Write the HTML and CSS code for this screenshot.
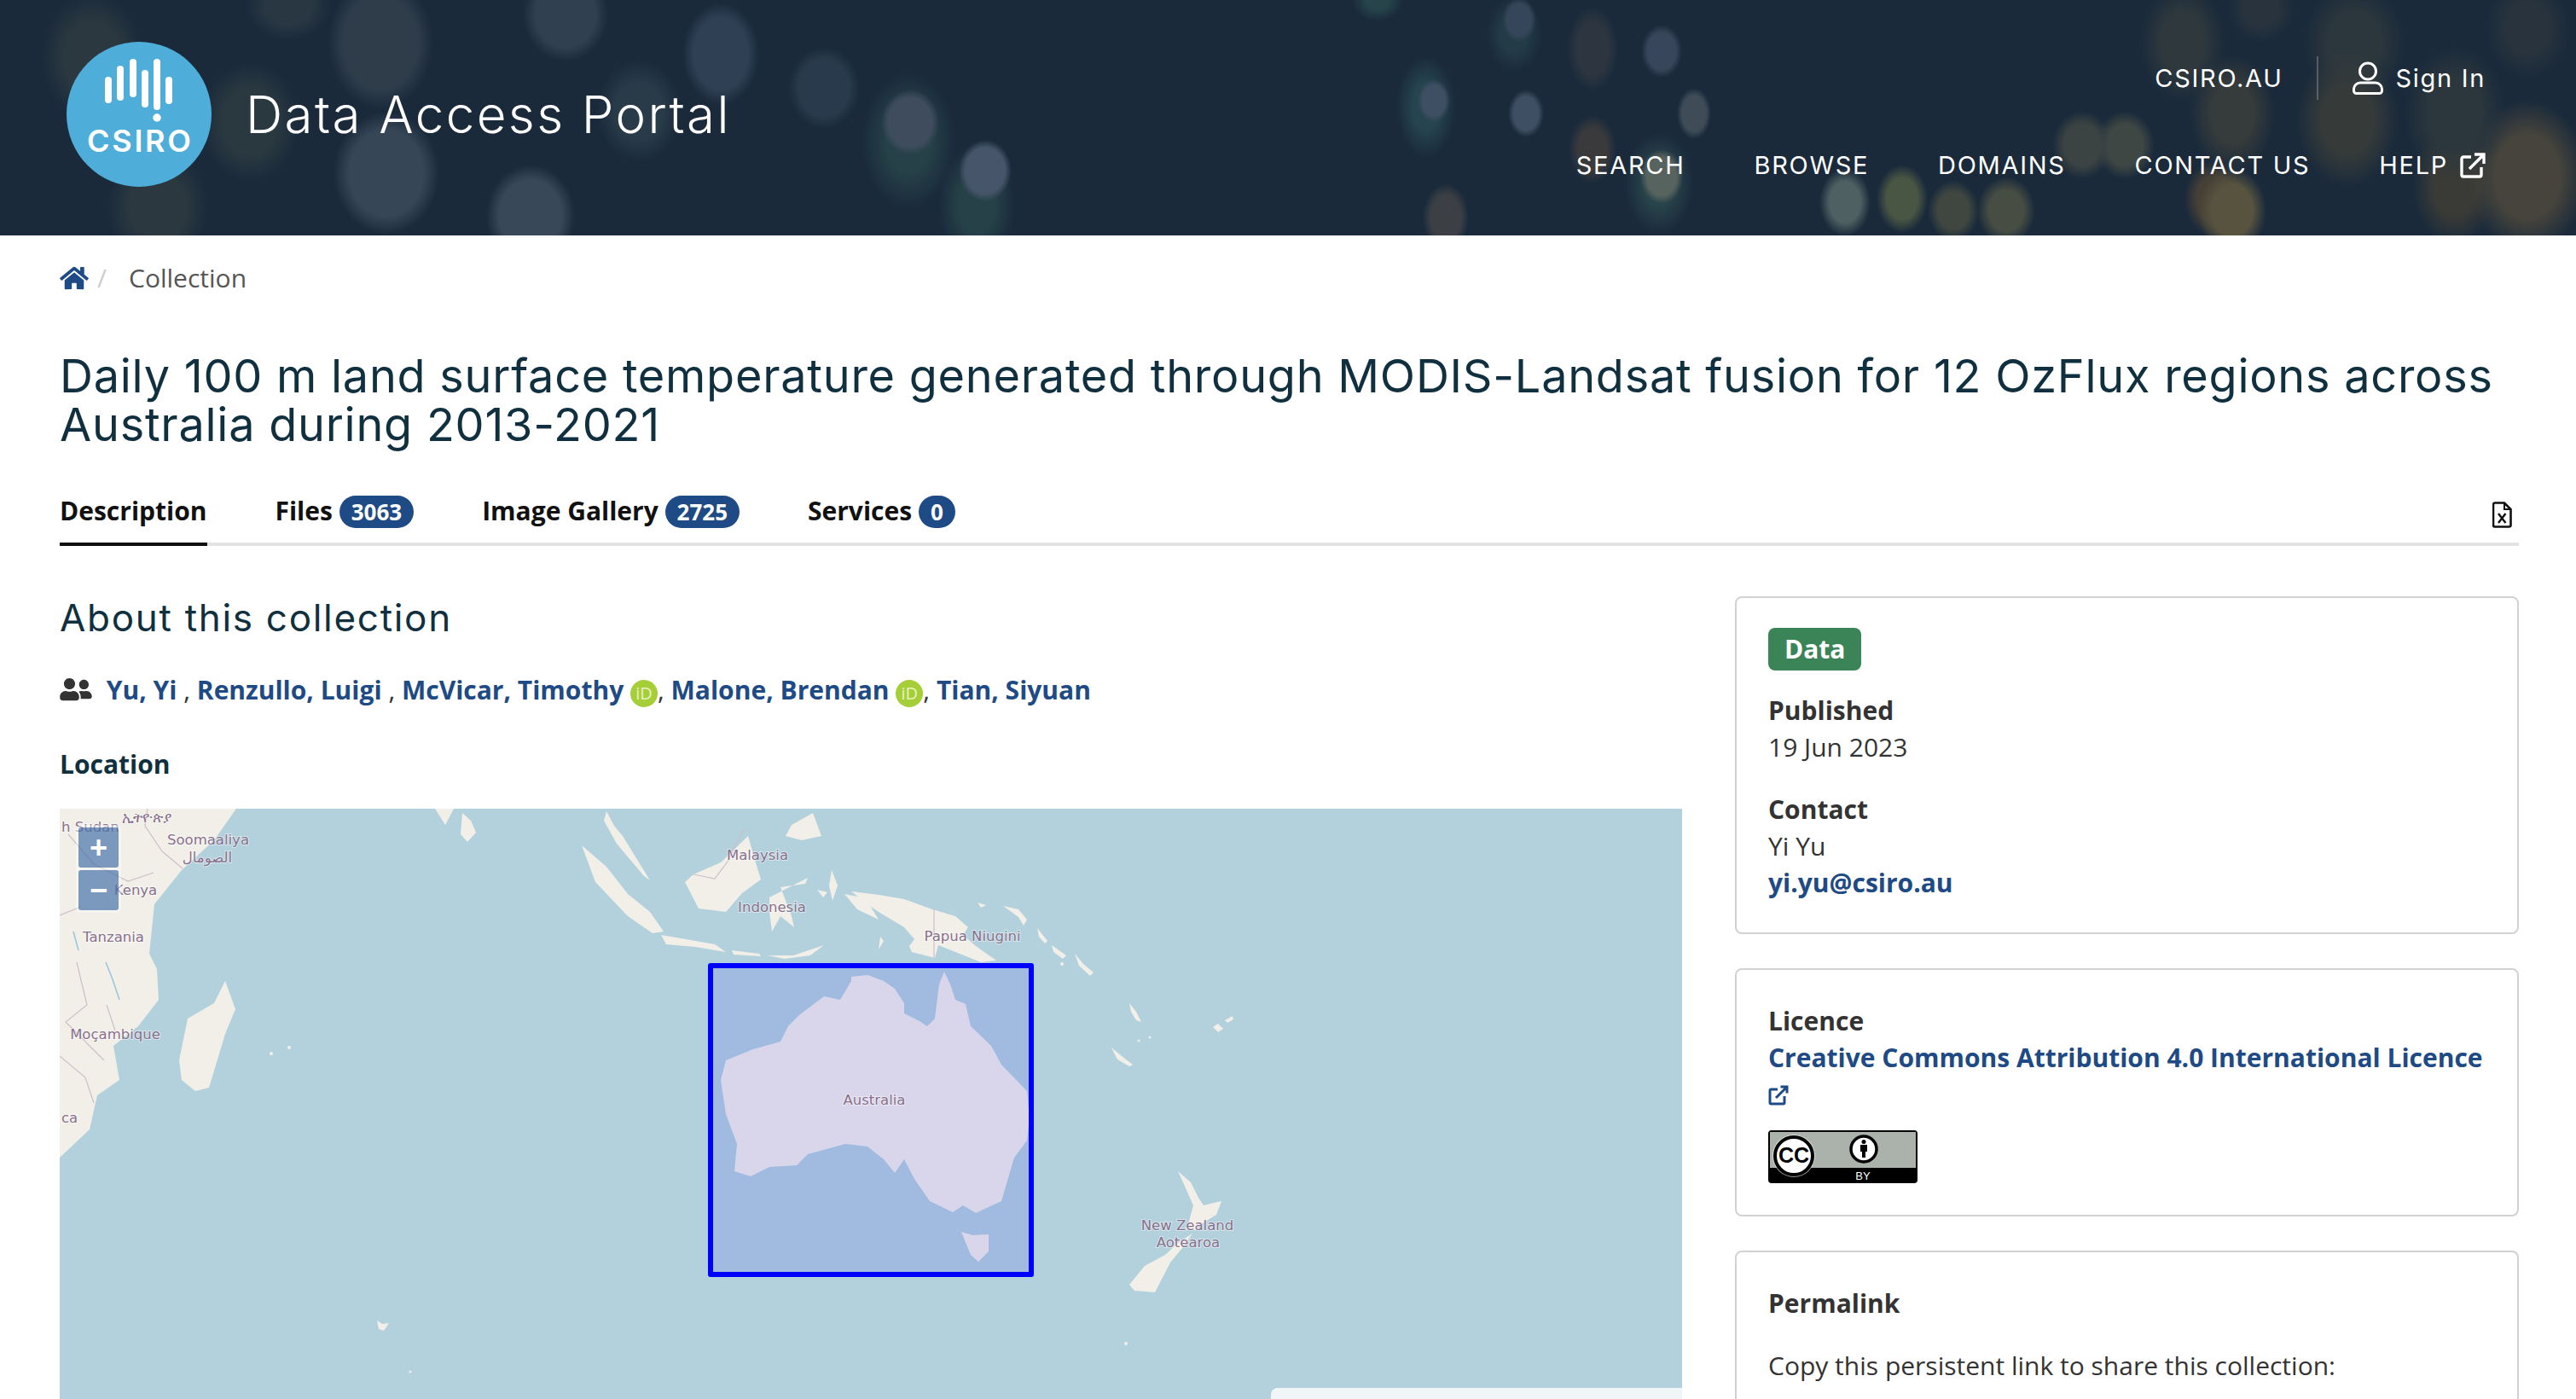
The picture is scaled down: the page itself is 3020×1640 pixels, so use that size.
FILE: index.html
```html
<!DOCTYPE html>
<html lang="en">
<head>
<meta charset="UTF-8">
<title>Data Access Portal</title>
<link rel="stylesheet" href="styles.css">
</head>
<body>

<header class="site-header">
    <a class="brand" href="#">
        <svg class="logo" viewBox="0 0 170 170">
            <circle cx="85" cy="85" r="85" fill="#4fadd9"/>
            <g stroke="#fff" stroke-width="8" stroke-linecap="round">
                <line x1="49" y1="45" x2="49" y2="68"/>
                <line x1="63" y1="32" x2="63" y2="65"/>
                <line x1="78" y1="24" x2="78" y2="61"/>
                <line x1="92" y1="37" x2="92" y2="73"/>
                <line x1="106" y1="24" x2="106" y2="76"/>
                <line x1="120" y1="45" x2="120" y2="69"/>
            </g>
            <circle cx="106" cy="89" r="4.7" fill="#fff"/>
            <text class="logo-text" x="24" y="129" textLength="122" lengthAdjust="spacing">CSIRO</text>
        </svg>
        <span class="brand-name">Data Access Portal</span>
    </a>
    <div class="header-right">
        <div class="util-nav">
            <a href="#">CSIRO.AU</a>
            <span class="util-divider"></span>
            <a class="sign-in" href="#">
                <svg class="icon-user" viewBox="0 0 36 40" fill="none" stroke="#fff" stroke-width="3">
                    <circle cx="18" cy="11.5" r="9.5"/>
                    <path d="M9 25h18a7.5 7.5 0 0 1 7.5 7.5v2a3 3 0 0 1-3 3h-27a3 3 0 0 1-3-3v-2A7.5 7.5 0 0 1 9 25z"/>
                </svg>
                Sign In
            </a>
        </div>
        <nav class="main-nav">
            <a href="#">SEARCH</a>
            <a href="#">BROWSE</a>
            <a href="#">DOMAINS</a>
            <a href="#">CONTACT US</a>
            <a class="help" href="#">HELP
                <svg class="icon-ext" viewBox="0 0 30 30" fill="none" stroke="#fff" stroke-width="3.4">
                    <path d="M13 5H4a2 2 0 0 0-2 2v19a2 2 0 0 0 2 2h19a2 2 0 0 0 2-2v-9"/>
                    <path d="M11 19L27 3M17 2h11v11"/>
                </svg>
            </a>
        </nav>
    </div>
</header>

<div class="page">
    <div class="breadcrumb">
        <a href="#">
            <svg class="icon-home" viewBox="0 0 576 512"><path fill="#1e4a85" d="M280.37 148.26L96 300.11V464a16 16 0 0 0 16 16l112.06-.29a16 16 0 0 0 15.92-16V368a16 16 0 0 1 16-16h64a16 16 0 0 1 16 16v95.64a16 16 0 0 0 16 16.05L464 480a16 16 0 0 0 16-16V300L295.67 148.26a12.19 12.19 0 0 0-15.3 0zM571.6 251.47L488 182.56V44.05a12 12 0 0 0-12-12h-56a12 12 0 0 0-12 12v72.61L318.47 43a48 48 0 0 0-61 0L4.34 251.47a12 12 0 0 0-1.6 16.9l25.5 31A12 12 0 0 0 45.15 301l235.22-193.74a12.19 12.19 0 0 1 15.3 0L530.9 301a12 12 0 0 0 16.9-1.6l25.5-31a12 12 0 0 0-1.7-16.93z"/></svg>
        </a>
        <span class="crumb-sep">/</span>
        <span>Collection</span>
    </div>

    <h1 class="page-title">Daily 100 m land surface temperature generated through MODIS-Landsat fusion for 12 OzFlux regions across Australia during 2013-2021</h1>

    <div class="tabs">
        <a class="tab active" href="#">Description</a>
        <a class="tab" href="#">Files <span class="count">3063</span></a>
        <a class="tab" href="#">Image Gallery <span class="count">2725</span></a>
        <a class="tab" href="#">Services <span class="count">0</span></a>
        <a class="tab-export" href="#">
            <svg class="icon-xls" viewBox="0 0 23 31" fill="none" stroke="#111" stroke-width="2.6">
                <path d="M3 1.5h11l7.5 7.5v18.5a2 2 0 0 1-2 2H3a2 2 0 0 1-2-2v-24a2 2 0 0 1 2-2z"/>
                <path d="M14 1.5V9h7.5" stroke-width="2"/>
                <path d="M7 14l8.5 11M15.5 14L7 25" stroke-width="2.4"/>
            </svg>
        </a>
    </div>

    <div class="content">
        <main>
            <h2 class="section-title">About this collection</h2>
            <p class="authors">
                <svg class="icon-users" viewBox="0 0 640 512"><path fill="#333" d="M192 256c61.9 0 112-50.1 112-112S253.9 32 192 32 80 82.1 80 144s50.1 112 112 112zm76.8 32h-8.3c-20.8 10-43.9 16-68.5 16s-47.6-6-68.5-16h-8.3C51.6 288 0 339.6 0 403.2V432c0 26.5 21.5 48 48 48h288c26.5 0 48-21.5 48-48v-28.8c0-63.6-51.6-115.2-115.2-115.2zM480 256c53 0 96-43 96-96s-43-96-96-96-96 43-96 96 43 96 96 96zm48 32h-3.8c-13.9 4.8-28.6 8-44.2 8s-30.3-3.2-44.2-8H432c-20.4 0-39.2 5.9-55.7 15.4 24.4 26.3 39.7 61.2 39.7 99.8v38.4c0 2.2-.5 4.3-.6 6.4H592c26.5 0 48-21.5 48-48 0-61.9-50.1-112-112-112z"/></svg>
                <a href="#">Yu, Yi</a> , <a href="#">Renzullo, Luigi</a> , <a href="#">McVicar, Timothy</a> <span class="orcid">iD</span>, <a href="#">Malone, Brendan</a> <span class="orcid">iD</span>, <a href="#">Tian, Siyuan</a>
            </p>
            <h3 class="location-title">Location</h3>

            <div class="map">
                <svg class="map-canvas" viewBox="0 0 1902 720">
                    <g fill="#f2efe9" class="land">
                        <!-- africa -->
                        <polygon points="0,0 207,0 181,37 143,72 111,112 105,170 114,188 116,224 92,255 63,278 70,318 44,336 35,376 0,409"/>
                        <polygon points="194,202 206,235 194,264 175,327 159,331 143,318 140,295 150,246 181,228"/>
                        <circle cx="248" cy="287" r="2"/><circle cx="269" cy="280" r="2"/>
                        <polygon points="372,600 378,604 386,603 380,612 374,610"/>
                        <circle cx="411" cy="660" r="1.5"/>
                        <!-- india, sri lanka -->
                        <polygon points="440,0 452,19 462,0"/>
                        <polygon points="472,5 482,14 488,28 478,39 470,30"/>
                        <!-- south east asia -->
                        <polygon points="641,3 650,20 660,32 692,84 685,79 653,41 638,14"/>
                        <polygon points="612,43 641,68 666,100 692,121 708,144 695,146 666,126 628,86"/>
                        <polygon points="705,148 740,154 768,159 781,168 745,162 711,159"/>
                        <polygon points="788,166 820,170 822,173 790,171"/>
                        <polygon points="830,172 860,172 896,160 880,172 850,176"/>
                        <polygon points="807,32 815,60 822,83 800,99 781,121 749,117 733,86 743,77 775,63"/>
                        <polygon points="832,104 877,81 874,88 845,92 858,126 861,139 845,126 835,144 832,121"/>
                        <polygon points="858,19 883,5 893,32 870,37 851,32"/>
                        <polygon points="905,72 912,90 906,108 902,90"/>
                        <polygon points="920,100 945,105 960,130 935,118"/>
                        <polygon points="888,95 900,98 895,104"/>
                        <polygon points="962,150 966,155 960,165"/>
                        <!-- papua -->
                        <polygon points="928,97 960,101 990,106 1020,117 1050,126 1065,139 1059,148 1074,161 1098,178 1080,180 1050,168 1030,160 1026,175 999,168 996,161 1002,153 990,139 960,121 947,112"/>
                        <polygon points="1076,110 1086,113 1080,116"/>
                        <polygon points="1106,114 1124,118 1134,130 1130,137 1124,127"/>
                        <polygon points="1146,140 1158,155 1155,158 1148,150"/>
                        <polygon points="1163,160 1180,172 1176,176 1165,168"/>
                        <polygon points="1190,170 1200,182 1212,192 1208,196 1195,184"/>
                        <circle cx="1175" cy="182" r="2"/>
                        <!-- pacific -->
                        <polygon points="1254,228 1262,238 1268,250 1262,248 1256,238"/>
                        <polygon points="1233,280 1245,290 1258,300 1254,302 1240,294"/>
                        <polygon points="1352,256 1358,252 1364,258 1358,262"/>
                        <polygon points="1366,248 1375,243 1376,247 1369,251"/>
                        <circle cx="1265" cy="272" r="1.5"/><circle cx="1278" cy="268" r="1.5"/>
                        <!-- australia -->
                        <polygon points="928,197 947,195 966,202 979,211 990,228 990,240 1008,249 1017,255 1026,246 1031,206 1037,191 1044,206 1050,224 1062,229 1068,255 1092,278 1104,300 1134,331 1137,362 1134,389 1119,409 1104,460 1074,474 1059,465 1047,473 1020,460 1011,447 1002,434 990,411 979,427 966,411 947,396 921,393 877,405 864,418 832,420 810,431 791,425 794,393 781,358 775,318 781,295 813,282 845,273 854,255 867,242 896,220 915,224 928,202"/>
                        <polygon points="1057,496 1070,500 1089,499 1089,519 1077,531 1068,523"/>
                        <!-- new zealand -->
                        <polygon points="1311,425 1326,438 1335,456 1341,465 1362,460 1356,476 1338,487 1332,494 1320,492 1323,487 1329,465 1317,438"/>
                        <polygon points="1328,498 1317,514 1302,532 1284,567 1260,565 1254,558 1272,536 1296,523 1311,509"/>
                        <circle cx="1250" cy="627" r="2"/>
                    </g>
                    <g fill="none" stroke="#cdbfc9" stroke-width="1.2">
                        <path d="M103 0l-3 20 20 30 24 20M10 30l30 35 40 20 30-10M0 125l25-10M20 180l12 50-25 20 45 45M65 260l-10-30M0 290l30 25 10 30"/>
                        <path d="M743 77l25 5 15-20 20-40"/>
                        <line x1="1025" y1="115" x2="1025" y2="175"/>
                    </g>
                    <g fill="none" stroke="#9bc6e0" stroke-width="1.6">
                        <path d="M16 144l6 22"/>
                        <path d="M54 180l8 20 8 24"/>
                    </g>
                    <rect class="extent" x="763" y="184" width="376" height="362"/>
                    <g class="map-labels">
                        <text x="102" y="16" text-anchor="middle">ኢትዮጵያ</text>
                        <text x="2" y="27">h Sudan</text>
                        <text x="174" y="42" text-anchor="middle">Soomaaliya</text>
                        <text x="173" y="63" text-anchor="middle">الصومال</text>
                        <text x="89" y="101" text-anchor="middle">Kenya</text>
                        <text x="63" y="156" text-anchor="middle">Tanzania</text>
                        <text x="65" y="270" text-anchor="middle">Moçambique</text>
                        <text x="2" y="368">ca</text>
                        <text x="818" y="60" text-anchor="middle">Malaysia</text>
                        <text x="835" y="121" text-anchor="middle">Indonesia</text>
                        <text x="955" y="347" text-anchor="middle">Australia</text>
                        <text x="1070" y="155" text-anchor="middle">Papua Niugini</text>
                        <text x="1322" y="494" text-anchor="middle">New Zealand</text>
                        <text x="1323" y="514" text-anchor="middle">Aotearoa</text>
                    </g>
                </svg>
                <div class="zoom-control">
                    <button class="zoom-btn">+</button>
                    <button class="zoom-btn">−</button>
                </div>
                <div class="attribution"></div>
            </div>
        </main>

        <aside class="sidebar">
            <section class="card data-card">
                <span class="type-badge">Data</span>
                <div class="meta-group">
                    <h4>Published</h4>
                    <p>19 Jun 2023</p>
                </div>
                <div class="meta-group">
                    <h4>Contact</h4>
                    <p>Yi Yu</p>
                    <p><a href="#">yi.yu@csiro.au</a></p>
                </div>
            </section>

            <section class="card licence-card">
                <h4>Licence</h4>
                <p><a href="#">Creative Commons Attribution 4.0 International Licence
                    <svg class="icon-ext-small" viewBox="0 0 24 24" fill="none" stroke="#1e4a85" stroke-width="3">
                        <path d="M11 5H3.5A1.5 1.5 0 0 0 2 6.5v14A1.5 1.5 0 0 0 3.5 22h14a1.5 1.5 0 0 0 1.5-1.5V13"/>
                        <path d="M9 15L22 2M14.5 2H22v7.5"/>
                    </svg>
                </a></p>
                <svg class="cc-badge" viewBox="0 0 175 62">
                    <rect width="175" height="62" rx="4" fill="#000"/>
                    <path d="M2 2h171v42H2z" fill="#aab2ab"/>
                    <circle cx="30" cy="30" r="25" fill="#fff" opacity=".55"/>
                    <circle cx="30" cy="30" r="22" fill="#fff" stroke="#000" stroke-width="4"/>
                    <text class="cc-text" x="30" y="38" text-anchor="middle">CC</text>
                    <circle cx="112" cy="22" r="15" fill="#fff" stroke="#000" stroke-width="3.5"/>
                    <circle cx="112" cy="13.5" r="2.5" fill="#000"/>
                    <path d="M108 17h8v8h-2v7h-4v-7h-2z" fill="#000"/>
                    <text class="by-text" x="111" y="58" text-anchor="middle">BY</text>
                </svg>
            </section>

            <section class="card permalink-card">
                <h4>Permalink</h4>
                <p>Copy this persistent link to share this collection:</p>
            </section>
        </aside>
    </div>
</div>

</body>
</html>
```

FILE: styles.css
```css
html, body {
    height: 100%;
    overflow: hidden;
}
body {
    margin: 0;
    background: #fff;
    color: #333;
    font-family: "Open Sans", "Noto Sans", sans-serif;
    font-size: 30px;
    line-height: 43px;
}
a {
    color: #1e4a85;
    text-decoration: none;
}
p, h1, h2, h3, h4 {
    margin: 0;
}

/* header, the bokeh is all background layers */
.site-header {
    height: 276px;
    display: flex;
    justify-content: space-between;
    background-color: #1a2a3b;
    background-image:
        radial-gradient(34px 38px at 1067px 143px, #3f4c5e 75%, transparent),
        radial-gradient(31px 36px at 1155px 200px, #46556a 75%, transparent),
        radial-gradient(19px 25px at 1681px 118px, #3f4f63 70%, transparent),
        radial-gradient(21px 28px at 1789px 133px, #3f4f63 70%, transparent),
        radial-gradient(20px 26px at 1781px 23px, #35465a 70%, transparent),
        radial-gradient(24px 31px at 1948px 60px, #37465a 70%, transparent),
        radial-gradient(20px 30px at 1986px 133px, #3f4c58 70%, transparent),
        radial-gradient(25px 32px at 1948px 207px, #57635f 70%, transparent),
        radial-gradient(30px 40px at 2163px 237px, #4e6062 60%, transparent),
        radial-gradient(30px 40px at 2230px 233px, #4a5644 60%, transparent),
        radial-gradient(34px 40px at 2352px 247px, #474d43 60%, transparent),
        radial-gradient(30px 36px at 2290px 247px, #404741 60%, transparent),
        radial-gradient(35px 40px at 2441px 170px, #3c4443 60%, transparent),
        radial-gradient(35px 40px at 2491px 170px, #3f4744 60%, transparent),
        radial-gradient(40px 50px at 2617px 247px, #57533f 60%, transparent),
        radial-gradient(35px 45px at 2596px 233px, #453f36 60%, transparent),
        radial-gradient(27px 40px at 1695px 255px, #3c4045 65%, transparent),
        radial-gradient(30px 50px at 1867px 57px, #2d3640 60%, transparent),
        radial-gradient(28px 40px at 1867px 175px, #3a3a3c 60%, transparent),
        radial-gradient(62px 78px at 446px 50px, #2f3d4b 70%, transparent),
        radial-gradient(50px 55px at 663px 17px, #304050 70%, transparent),
        radial-gradient(45px 60px at 845px 63px, #2f4055 70%, transparent),
        radial-gradient(42px 48px at 966px 103px, #283a4b 70%, transparent),
        radial-gradient(62px 72px at 453px 203px, #374657 70%, transparent),
        radial-gradient(52px 60px at 622px 253px, #394859 70%, transparent),
        radial-gradient(58px 70px at 293px 143px, #2a3940 55%, transparent),
        radial-gradient(50px 60px at 749px 130px, #293a49 55%, transparent),
        radial-gradient(60px 75px at 108px 67px, #2b3840 55%, transparent),
        radial-gradient(60px 70px at 185px 243px, #2b3840 55%, transparent),
        radial-gradient(50px 40px at 338px 7px, #283742 55%, transparent),
        radial-gradient(55px 80px at 1065px 165px, #264248 45%, transparent),
        radial-gradient(45px 70px at 1145px 240px, #264248 45%, transparent),
        radial-gradient(35px 60px at 1672px 125px, #264450 45%, transparent),
        radial-gradient(33px 45px at 1775px 40px, #233b47 45%, transparent),
        radial-gradient(40px 60px at 1945px 215px, #28434a 45%, transparent),
        radial-gradient(30px 25px at 1615px 0, #26444a 45%, transparent),
        radial-gradient(50px 70px at 2559px 50px, #2e383d 50%, transparent),
        radial-gradient(50px 70px at 2617px 133px, #363b3b 50%, transparent),
        radial-gradient(60px 80px at 2752px 140px, #363b3a 50%, transparent),
        radial-gradient(60px 70px at 2760px 50px, #2c373d 50%, transparent),
        radial-gradient(60px 80px at 2878px 133px, #2c373d 50%, transparent),
        radial-gradient(70px 90px at 2963px 207px, #46443c 55%, transparent),
        radial-gradient(50px 70px at 2878px 217px, #3a3b36 50%, transparent),
        radial-gradient(50px 60px at 2963px 33px, #28333d 50%, transparent),
        radial-gradient(40px 40px at 2651px 10px, #28333d 50%, transparent);
}
.site-header a {
    color: #fff;
}
.brand {
    display: flex;
    align-items: center;
    gap: 40px;
    padding-left: 78px;
    height: 268px;
}
.logo {
    width: 170px;
    height: 170px;
}
.logo-text {
    fill: #fff;
    font-family: Inter, sans-serif;
    font-size: 36px;
    font-weight: 600;
}
.brand-name {
    font-family: Inter, sans-serif;
    font-size: 60px;
    font-weight: 300;
    letter-spacing: 2.4px;
    line-height: 70px;
}
.header-right {
    display: flex;
    flex-direction: column;
    align-items: flex-end;
    padding: 66px 106px 0 0;
    font-family: Inter, sans-serif;
    font-size: 29px;
    font-weight: 400;
    letter-spacing: 1.7px;
}
.util-nav {
    display: flex;
    align-items: center;
    height: 51px;
}
.util-divider {
    width: 2px;
    height: 51px;
    margin: 0 40px;
    background: rgba(255, 255, 255, 0.22);
}
.sign-in {
    display: flex;
    align-items: center;
    gap: 14px;
}
.icon-user {
    width: 36px;
    height: 40px;
}
.main-nav {
    display: flex;
    gap: 81px;
    margin-top: 55px;
}
.help {
    display: flex;
    align-items: center;
    gap: 14px;
}
.icon-ext {
    width: 30px;
    height: 30px;
}

/* page */
.page {
    padding: 0 67px 0 70px;
}
.breadcrumb {
    display: flex;
    align-items: center;
    padding-top: 28px;
    color: #555;
}
.icon-home {
    display: block;
    width: 34px;
    height: 30px;
}
.crumb-sep {
    margin: 0 26px 0 10px;
    color: #ccc;
}
.page-title {
    margin-top: 65px;
    color: #10303f;
    font-family: Inter, sans-serif;
    font-size: 54px;
    font-weight: 400;
    letter-spacing: 0.75px;
    line-height: 57px;
}

.tabs {
    display: flex;
    gap: 80px;
    margin-top: 51px;
    border-bottom: 4px solid #e3e3e3;
}
.tab {
    margin-bottom: -4px;
    padding-bottom: 16px;
    border-bottom: 4px solid transparent;
    color: #111;
    font-weight: 700;
    white-space: nowrap;
}
.tab.active {
    border-bottom-color: #111;
}
.count {
    display: inline-block;
    padding: 0 14px;
    border-radius: 19px;
    background: #1e4a85;
    color: #fff;
    font-size: 26px;
    line-height: 38px;
}
.tab-export {
    margin-left: auto;
    padding: 11px 8px 0 0;
}
.icon-xls {
    display: block;
    width: 23px;
    height: 31px;
}

.content {
    display: grid;
    grid-template-columns: 1fr 919px;
    gap: 62px;
    margin-top: 59px;
}
.section-title {
    color: #10303f;
    font-family: Inter, sans-serif;
    font-size: 44px;
    font-weight: 400;
    letter-spacing: 1.7px;
    line-height: 50px;
}
.authors {
    margin-top: 38px;
    white-space: nowrap;
}
.authors a {
    font-weight: 700;
}
.icon-users {
    width: 38px;
    height: 30px;
    margin-right: 9px;
    vertical-align: -3px;
}
.orcid {
    display: inline-block;
    width: 32px;
    height: 32px;
    border-radius: 50%;
    background: #a6ce39;
    color: #e6f2c0;
    font-size: 20px;
    line-height: 32px;
    text-align: center;
}
.location-title {
    margin-top: 44px;
    color: #10303f;
    font-size: 30px;
    font-weight: 700;
}

/* map */
.map {
    position: relative;
    height: 720px;
    margin-top: 31px;
    overflow: hidden;
    background: #b3d1dc;
}
.map-canvas {
    display: block;
    width: 100%;
    height: 100%;
}
.land {
    filter: blur(0.6px);
}
.extent {
    fill: rgba(0, 0, 255, 0.1);
    stroke: #0000ff;
    stroke-width: 6;
    stroke-linejoin: round;
}
.map-labels text {
    fill: #87708c;
    font-family: "DejaVu Sans", "Noto Sans", sans-serif;
    font-size: 16.5px;
    paint-order: stroke;
    stroke: rgba(255, 255, 255, 0.5);
    stroke-width: 2px;
}
.zoom-control {
    position: absolute;
    top: 19px;
    left: 19px;
    display: flex;
    flex-direction: column;
    gap: 3px;
    padding: 3px;
    border-radius: 6px;
    background: rgba(255, 255, 255, 0.4);
}
.zoom-btn {
    width: 47px;
    height: 47px;
    padding: 0;
    border: 0;
    border-radius: 3px;
    background: rgba(0, 60, 136, 0.5);
    color: #fff;
    font-family: "Liberation Sans", sans-serif;
    font-size: 36px;
    font-weight: 700;
    line-height: 47px;
}
.attribution {
    position: absolute;
    right: 0;
    bottom: 0;
    width: 482px;
    height: 41px;
    border-top-left-radius: 8px;
    background: rgba(255, 255, 255, 0.8);
}

/* sidebar */
.card {
    margin-bottom: 40px;
    padding: 38px 37px;
    border: 2px solid #d2d2d2;
    border-radius: 8px;
}
.data-card {
    padding-top: 35px;
    padding-bottom: 37px;
}
.card h4 {
    font-size: 30px;
    font-weight: 700;
}
.card a {
    font-weight: 700;
}
.type-badge {
    display: inline-block;
    padding: 0 19px;
    border-radius: 8px;
    background: #3b8458;
    color: #fff;
    font-weight: 700;
    line-height: 50px;
}
.meta-group {
    margin-top: 25px;
}
.meta-group + .meta-group {
    margin-top: 30px;
}
.licence-card {
    height: 291px;
    box-sizing: border-box;
}
.icon-ext-small {
    display: inline-block;
    width: 24px;
    height: 24px;
    vertical-align: -2px;
}
.cc-badge {
    display: block;
    width: 175px;
    height: 62px;
    margin-top: 21px;
}
.cc-text {
    font-family: "Liberation Sans", sans-serif;
    font-size: 25px;
    font-weight: 700;
}
.by-text {
    fill: #fff;
    font-family: "Liberation Sans", sans-serif;
    font-size: 13px;
}
.permalink-card p {
    margin-top: 30px;
}
```
